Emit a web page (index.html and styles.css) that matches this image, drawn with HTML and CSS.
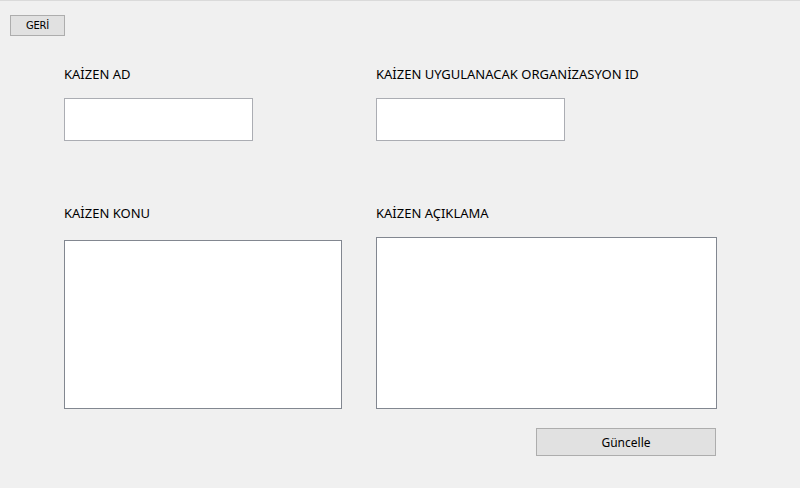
FILE: index.html
```html
<!DOCTYPE html>
<html lang="tr">
<head>
<meta charset="utf-8">
<link rel="stylesheet" href="styles.css">
</head>
<body>
<div class="window">
  <div class="toolbar">
    <button class="btn btn-back">GERİ</button>
  </div>
  <div class="form">
    <div class="field col-left">
      <label class="label">KAİZEN AD</label>
      <div class="input input-short"></div>
    </div>
    <div class="field col-right">
      <label class="label">KAİZEN UYGULANACAK ORGANİZASYON ID</label>
      <div class="input input-short"></div>
    </div>
    <div class="field col-left row2">
      <label class="label">KAİZEN KONU</label>
      <div class="textarea ta-konu"></div>
    </div>
    <div class="field col-right row2">
      <label class="label">KAİZEN AÇIKLAMA</label>
      <div class="textarea ta-aciklama"></div>
    </div>
  </div>
  <div class="actions">
    <button class="btn btn-update">Güncelle</button>
  </div>
</div>
</body>
</html>
```

FILE: styles.css
```css
html, body {
  margin: 0;
  padding: 0;
  background: #f0f0f0;
}
.window {
  width: 800px;
  height: 488px;
  box-sizing: border-box;
  border-top: 1px solid #dadada;
  background: #f0f0f0;
  font-family: "Noto Sans", "Open Sans", sans-serif;
  color: #000;
}
.toolbar {
  padding: 14px 0 0 10px;
  display: flex;
}
.btn {
  box-sizing: border-box;
  background: #e1e1e1;
  border: 1px solid #adadad;
  color: #000;
  padding: 0;
  margin: 0;
  font-family: "DejaVu Sans", sans-serif;
}
.btn-back {
  width: 55px;
  height: 21px;
  font-size: 10px;
  letter-spacing: -0.2px;
}
.form {
  display: grid;
  grid-template-columns: 312px 341px;
  padding: 30px 0 0 64px;
}
.field {
  display: flex;
  flex-direction: column;
  align-items: flex-start;
}
.label {
  font-size: 13px;
  line-height: 16px;
  height: 16px;
  white-space: nowrap;
}
.input {
  box-sizing: border-box;
  background: #fff;
  border: 1px solid #abadb3;
  margin-top: 16px;
}
.input-short {
  width: 189px;
  height: 43px;
}
.row2 {
  margin-top: 64px;
}
.textarea {
  box-sizing: border-box;
  background: #fff;
  border: 1px solid #828790;
}
.ta-konu {
  width: 278px;
  height: 169px;
  margin-top: 19px;
}
.ta-aciklama {
  width: 341px;
  height: 172px;
  margin-top: 16px;
}
.actions {
  display: flex;
  padding: 19px 0 0 536px;
}
.btn-update {
  width: 180px;
  height: 28px;
  font-family: "Noto Sans", sans-serif;
  font-size: 12px;
}
```
